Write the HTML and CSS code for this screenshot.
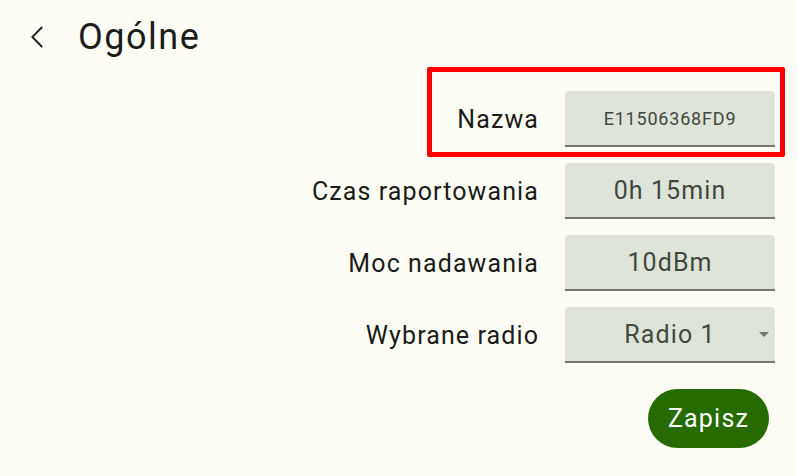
FILE: index.html
```html
<!DOCTYPE html>
<html lang="pl">
<head>
<meta charset="utf-8">
<title>Ogólne</title>
<link rel="stylesheet" href="styles.css">
</head>
<body>
<div class="page">
  <header class="topbar">
    <button class="back" aria-label="Wstecz">
      <svg width="14" height="22" viewBox="0 0 14 22"><path d="M12.2 1 L2.3 11 L12.2 21" fill="none" stroke="#1a1c18" stroke-width="1.8"/></svg>
    </button>
    <h1 class="title">Ogólne</h1>
  </header>
  <main class="form">
    <div class="row highlighted">
      <label class="label">Nazwa</label>
      <div class="field small">E11506368FD9</div>
      <div class="mark"></div>
    </div>
    <div class="row">
      <label class="label">Czas raportowania</label>
      <div class="field">0h 15min</div>
    </div>
    <div class="row">
      <label class="label">Moc nadawania</label>
      <div class="field">10dBm</div>
    </div>
    <div class="row">
      <label class="label">Wybrane radio</label>
      <div class="field select">Radio 1<span class="arrow"></span></div>
    </div>
    <div class="actions">
      <button class="save">Zapisz</button>
    </div>
  </main>
</div>
</body>
</html>
```
FILE: styles.css
```css
html, body {
  margin: 0;
  padding: 0;
  background: #fdfdf5;
}
body {
  font-family: Roboto, "Noto Sans", sans-serif;
  color: #1a1c18;
  width: 797px;
  height: 476px;
  overflow: hidden;
}
.page {
  display: flex;
  flex-direction: column;
}
.topbar {
  display: flex;
  align-items: center;
  height: 76px;
  padding-left: 30px;
}
.back {
  width: 14px;
  height: 22px;
  padding: 0;
  border: 0;
  background: none;
  display: flex;
  margin-top: -3px;
}
.title {
  margin: -3px 0 0 34px;
  font-weight: 400;
  font-size: 36px;
  line-height: 40px;
  letter-spacing: 1.5px;
  color: #1a1c18;
}
.form {
  display: flex;
  flex-direction: column;
  gap: 16px;
  padding-top: 15px;
  padding-right: 22px;
}
.row {
  display: flex;
  justify-content: flex-end;
  align-items: center;
  gap: 26px;
  position: relative;
}
.label {
  font-size: 25px;
  letter-spacing: 1.1px;
  color: #1a1c18;
}
.field {
  width: 210px;
  height: 54px;
  box-sizing: content-box;
  background: #dee4d9;
  border-radius: 4px 4px 0 0;
  border-bottom: 2px solid #73796e;
  display: flex;
  align-items: center;
  justify-content: center;
  font-size: 25px;
  color: #43483e;
  letter-spacing: 1.1px;
  position: relative;
}
.field.small {
  font-size: 18px;
  letter-spacing: 0.8px;
}
.arrow {
  position: absolute;
  right: 6px;
  top: 25px;
  width: 0;
  height: 0;
  border-left: 5px solid transparent;
  border-right: 5px solid transparent;
  border-top: 5px solid #73796e;
}
.mark {
  position: absolute;
  left: 427px;
  top: -24px;
  width: 348px;
  height: 80px;
  border: 5px solid #fe0000;
  border-radius: 2px;
  pointer-events: none;
}
.actions {
  display: flex;
  justify-content: flex-end;
  padding-top: 10px;
  padding-right: 6px;
}
.save {
  width: 121px;
  height: 59px;
  border: 0;
  border-radius: 30px;
  background: #266b00;
  color: #ffffff;
  font-family: Roboto, "Noto Sans", sans-serif;
  font-size: 25px;
  letter-spacing: 1.2px;
}
```
